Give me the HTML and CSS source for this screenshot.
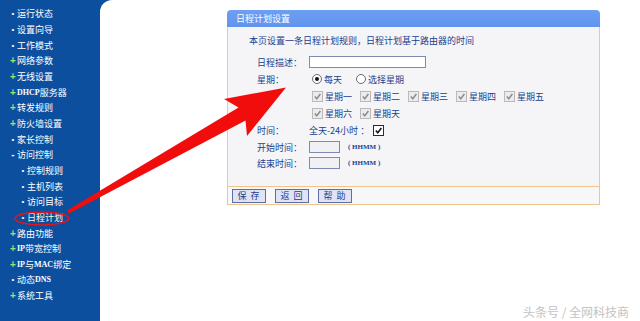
FILE: index.html
```html
<!DOCTYPE html>
<html lang="zh-CN">
<head>
    <meta charset="UTF-8">
    <meta name="viewport" content="width=device-width, initial-scale=1.0">
    <title>日程计划设置</title>
    <link rel="stylesheet" href="styles.css">
</head>
<body>

    <div class="layout">
        <nav class="menu">
            <div class="item"><span class="mark dot">•</span>运行状态</div>
            <div class="item"><span class="mark dot">•</span>设置向导</div>
            <div class="item"><span class="mark dot">•</span>工作模式</div>
            <div class="item"><span class="mark plus">+</span>网络参数</div>
            <div class="item"><span class="mark plus">+</span>无线设置</div>
            <div class="item"><span class="mark plus">+</span><span class="latin">DHCP</span>服务器</div>
            <div class="item"><span class="mark plus">+</span>转发规则</div>
            <div class="item"><span class="mark plus">+</span>防火墙设置</div>
            <div class="item"><span class="mark dot">•</span>家长控制</div>
            <div class="item"><span class="mark minus">-</span>访问控制</div>
            <div class="item sub"><span class="mark dot">•</span>控制规则</div>
            <div class="item sub"><span class="mark dot">•</span>主机列表</div>
            <div class="item sub"><span class="mark dot">•</span>访问目标</div>
            <div class="item sub current"><span class="mark dot">•</span>日程计划</div>
            <div class="item"><span class="mark plus">+</span>路由功能</div>
            <div class="item"><span class="mark plus">+</span><span class="latin">IP</span>带宽控制</div>
            <div class="item"><span class="mark plus">+</span><span class="latin">IP</span>与<span class="latin">MAC</span>绑定</div>
            <div class="item"><span class="mark dot">•</span>动态<span class="latin">DNS</span></div>
            <div class="item"><span class="mark plus">+</span>系统工具</div>
        </nav>

        <main class="content">
            <div class="panel">
                <div class="panel-title">日程计划设置</div>
                <div class="panel-body">
                    <div class="desc">本页设置一条日程计划规则，日程计划基于路由器的时间</div>
                    <div class="form">
                        <div class="label">日程描述：</div>
                        <div class="field"><span class="textbox wide"></span></div>

                        <div class="label">星期：</div>
                        <div class="field">
                            <span class="radio on"></span><span class="opt">每天</span>
                            <span class="radio second"></span><span class="opt">选择星期</span>
                        </div>

                        <div class="label"></div>
                        <div class="field">
                            <span class="check-item"><span class="check off"><svg viewBox="0 0 10 10"><path d="M2 5 L4.2 7.5 L8.2 2.3"/></svg></span>星期一</span>
                            <span class="check-item"><span class="check off"><svg viewBox="0 0 10 10"><path d="M2 5 L4.2 7.5 L8.2 2.3"/></svg></span>星期二</span>
                            <span class="check-item"><span class="check off"><svg viewBox="0 0 10 10"><path d="M2 5 L4.2 7.5 L8.2 2.3"/></svg></span>星期三</span>
                            <span class="check-item"><span class="check off"><svg viewBox="0 0 10 10"><path d="M2 5 L4.2 7.5 L8.2 2.3"/></svg></span>星期四</span>
                            <span class="check-item"><span class="check off"><svg viewBox="0 0 10 10"><path d="M2 5 L4.2 7.5 L8.2 2.3"/></svg></span>星期五</span>
                        </div>

                        <div class="label"></div>
                        <div class="field">
                            <span class="check-item"><span class="check off"><svg viewBox="0 0 10 10"><path d="M2 5 L4.2 7.5 L8.2 2.3"/></svg></span>星期六</span>
                            <span class="check-item"><span class="check off"><svg viewBox="0 0 10 10"><path d="M2 5 L4.2 7.5 L8.2 2.3"/></svg></span>星期天</span>
                        </div>

                        <div class="label">时间：</div>
                        <div class="field">全天-24小时 ：<span class="check on"><svg viewBox="0 0 10 10"><path d="M2 5 L4.2 7.5 L8.2 2.3"/></svg></span></div>

                        <div class="label">开始时间：</div>
                        <div class="field"><span class="textbox short"></span><span class="hint">( HHMM )</span></div>

                        <div class="label">结束时间：</div>
                        <div class="field"><span class="textbox short"></span><span class="hint">( HHMM )</span></div>
                    </div>
                </div>
                <div class="panel-foot">
                    <button class="btn">保 存</button>
                    <button class="btn">返 回</button>
                    <button class="btn">帮 助</button>
                </div>
            </div>
        </main>
    </div>

    <!-- red annotation drawn over the screenshot -->
    <svg class="marks" viewBox="0 0 640 321">
        <ellipse cx="42" cy="218.5" rx="27" ry="6.5" fill="none" stroke="#e3141c" stroke-width="1.6"/>
        <polygon points="67,210.5 238.5,107.5 224,99 286,87.5 247,136 245.5,120.5 69,213.5" fill="#f20d0d"/>
    </svg>

    <div class="watermark">头条号 / 全网科技商</div>

</body>
</html>
```

FILE: styles.css
```css
body {
    margin: 0;
    width: 640px;
    height: 321px;
    overflow: hidden;
    background: #0c4f9f;
    font-family: "Noto Sans CJK SC", "Liberation Sans", sans-serif;
    position: relative;
}
.layout {
    display: flex;
    height: 321px;
}
.menu {
    width: 100px;
    padding-top: 6px;
    color: #fff;
    font-size: 9px;
}
.item {
    display: flex;
    align-items: center;
    height: 15.67px;
    padding-left: 9px;
    white-space: nowrap;
}
.item.sub {
    padding-left: 19px;
}
.item.current {
    color: #fbf7d8;
}
.mark {
    width: 8px;
    text-align: center;
    font-family: "Liberation Sans", sans-serif;
}
.mark.dot {
    font-size: 8px;
}
.mark.plus {
    color: #9fe07a;
    font-weight: bold;
    font-size: 10px;
}
.mark.minus {
    color: #e8eefa;
    font-weight: bold;
    font-size: 10px;
}
.latin {
    font-family: "Liberation Serif", serif;
    font-size: 8px;
    font-weight: bold;
}
.content {
    flex: 1;
    background: #fff;
    border-top-left-radius: 12px;
    padding: 10px 0 0 127px;
}
.panel {
    width: 373px;
    color: #203e8e;
    font-size: 9px;
}
.panel-title {
    height: 17px;
    line-height: 17px;
    padding-left: 9px;
    background: linear-gradient(#6d9ff2, #5f94ee);
    border-radius: 4px 4px 0 0;
    color: #fff;
}
.panel-body {
    background: #f5f5f7;
    border-left: 1px solid #f3c88f;
    border-right: 1px solid #f3c88f;
    padding: 7px 0 15px 0;
}
.desc {
    height: 14px;
    line-height: 14px;
    padding-left: 21px;
    margin-bottom: 6px;
}
.form {
    display: grid;
    grid-template-columns: 52px 1fr;
    grid-template-rows: 16px 18px 17px 17px 17px 16px 16px;
    padding-left: 29px;
}
.label,
.field {
    display: flex;
    align-items: center;
    white-space: nowrap;
}
.textbox {
    display: inline-block;
    height: 10px;
    border: 1px solid #7d8bb3;
    background: #fff;
}
.textbox.wide {
    width: 115px;
}
.textbox.short {
    width: 29px;
    background: #f1f1f3;
}
.hint {
    margin-left: 8px;
    font-family: "Liberation Serif", serif;
    font-size: 7px;
    font-weight: bold;
}
.radio {
    width: 8px;
    height: 8px;
    margin-left: 3px;
    margin-right: 2px;
    border: 1px solid #6a6a6a;
    border-radius: 50%;
    background: #fff;
    position: relative;
}
.radio.on::after {
    content: "";
    position: absolute;
    left: 2px;
    top: 2px;
    width: 4px;
    height: 4px;
    border-radius: 50%;
    background: #111;
}
.radio.second {
    margin-left: 14px;
}
.check-item {
    display: flex;
    align-items: center;
    width: 48px;
}
.check {
    width: 9px;
    height: 9px;
    margin: 0 2px 0 3px;
    border: 1px solid #b9b9b9;
    background: #ececec;
    display: inline-block;
}
.check svg {
    display: block;
    width: 9px;
    height: 9px;
}
.check path {
    fill: none;
    stroke: #8c8c8c;
    stroke-width: 1.7;
}
.check.on {
    margin-left: 4px;
    border-color: #2b2b2b;
    background: #fff;
}
.check.on path {
    stroke: #111;
}
.panel-foot {
    display: flex;
    align-items: center;
    gap: 9px;
    height: 17px;
    padding-left: 4px;
    background: #f7f7f9;
    border: 1px solid #f0c48d;
}
.btn {
    height: 14px;
    width: 34px;
    padding: 0;
    background: #dfe3f4;
    border: 1px solid #5b6ea6;
    color: #203e8e;
    font-family: "Noto Sans CJK SC", sans-serif;
    font-size: 9px;
    line-height: 12px;
    letter-spacing: 1px;
}
.marks {
    position: absolute;
    left: 0;
    top: 0;
    width: 640px;
    height: 321px;
    pointer-events: none;
}
.watermark {
    position: absolute;
    left: 523px;
    top: 304px;
    color: #c3c3c3;
    font-size: 12px;
    line-height: 16px;
    white-space: nowrap;
    text-shadow: 0 0 1px #fff;
}
```
